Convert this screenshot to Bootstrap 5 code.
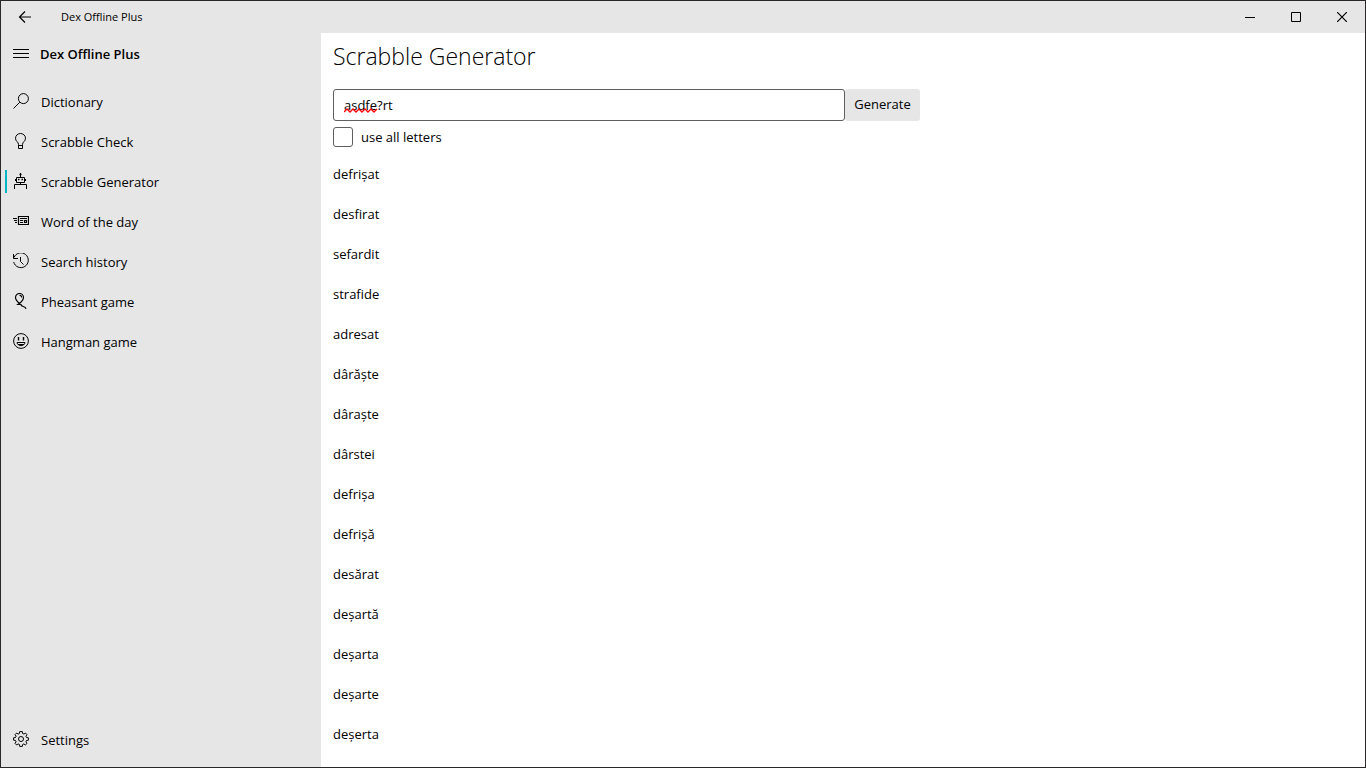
<!DOCTYPE html>
<html lang="en">
<head>
<meta charset="utf-8">
<meta name="viewport" content="width=device-width, initial-scale=1">
<title>Dex Offline Plus</title>
<link href="https://cdn.jsdelivr.net/npm/bootstrap@5.3.0/dist/css/bootstrap.min.css" rel="stylesheet">
<style>
  body { font-family: "Open Sans", "Noto Sans", sans-serif; font-size: 13px; line-height: 20px; color: #000; background: #fff; }
  .app-window { border: 1px solid #2b2829; }
  .chrome-bg { background: #e6e6e6; }
  .titlebar { height: 32px; font-size: 11px; }
  .titlebar button { width: 46px; height: 32px; border: 0; background: none; padding: 0; color: inherit; }
  .titlebar .back { width: 48px; }
  .sidebar { width: 320px; }
  .pane-head { height: 42px; font-weight: 600; margin-bottom: 7px; }
  .pane-head button { border: 0; background: none; padding: 0; width: 39px; }
  .side-link { height: 40px; padding: 0 12px; gap: 12px; color: #000; position: relative; }
  .side-link svg { margin-bottom: 2px; }
  .side-link.active::before { content: ""; position: absolute; left: 4px; top: 8px; width: 2px; height: 23px; background: #00b7c3; }
  .side-foot { margin-bottom: 7px; }
  svg { display: block; flex: none; fill: none; stroke: currentColor; }
  .page-title { font-size: 23px; line-height: 32px; font-weight: 300; margin: 7px 0 17px; }
  .query { width: 512px; }
  .query input { height: 32px; border: 1px solid #5f5f5f; border-radius: 3px; padding: 0 10px; font-size: 13px; color: #000; }
  .squiggle { position: absolute; left: 11px; top: 18px; stroke: #f00; }
  .btn-generate { width: 75px; height: 32px; padding: 0; border: 0; border-radius: 3px; background: #e6e6e6; font-size: 13px; color: #000; }
  .check-all { width: 20px; height: 20px; margin: 0; border: 1px solid #5f5f5f; }
  .form-check-input.check-all { border-radius: 3px; }
  .option-row { margin-top: 6px; }
  .words { margin-top: 7px; }
  .words li { height: 40px; }
</style>
</head>
<body>
<div class="app-window chrome-bg d-flex flex-column vh-100 overflow-hidden">
  <header class="titlebar d-flex align-items-center flex-shrink-0">
    <button class="back d-flex align-items-center justify-content-center" type="button" aria-label="Back">
      <svg width="14" height="14" viewBox="0 0 14 14" stroke-width="1.2"><path d="M1.5 7H13M7 1.5L1.5 7L7 12.5"/></svg>
    </button>
    <span class="ms-2 ps-1 me-auto">Dex Offline Plus</span>
    <button class="d-flex align-items-center justify-content-center" type="button" aria-label="Minimize"><svg width="10" height="10"><path d="M0 5.5H10"/></svg></button>
    <button class="d-flex align-items-center justify-content-center" type="button" aria-label="Maximize"><svg width="10" height="10"><path d="M.5 .5H9.5V9.5H.5Z"/></svg></button>
    <button class="d-flex align-items-center justify-content-center" type="button" aria-label="Close"><svg width="10" height="10" stroke-width="1.2"><path d="M0 0L10 10M10 0L0 10"/></svg></button>
  </header>
  <div class="d-flex flex-grow-1 overflow-hidden">
    <aside class="sidebar d-flex flex-column flex-shrink-0">
      <div class="pane-head d-flex align-items-center">
        <button type="button" class="ps-2" aria-label="Menu"><svg class="ms-1" width="16" height="10"><path d="M0 .5H16M0 4.5H16M0 8.5H16"/></svg></button>
        <span>Dex Offline Plus</span>
      </div>
      <nav class="d-flex flex-column flex-grow-1" aria-label="Main">
        <a href="#" class="side-link d-flex align-items-center text-decoration-none">
          <svg width="16" height="16"><circle cx="10.4" cy="5.6" r="5"/><path d="M6.8 9.2L.5 15.5"/></svg><span>Dictionary</span></a>
        <a href="#" class="side-link d-flex align-items-center text-decoration-none">
          <svg width="16" height="16"><path d="M5.5 11.5C5.5 8.8 2.5 8.5 2.5 5.3A5 4.8 0 0 1 12.5 5.3C12.5 8.5 9.5 8.8 9.5 11.5V15.5H5.5ZM5.5 12.5H9.5"/></svg><span>Scrabble Check</span></a>
        <a href="#" class="side-link active d-flex align-items-center text-decoration-none" aria-current="page">
          <svg width="16" height="16"><path d="M7.5 0V4M3.5 4.5H11.5V9.5H3.5ZM2.5 6V8M12.5 6V8M7.5 9.5V11M1.5 16V11.5H13.5V16"/><path d="M5 6.5H6.5M8.5 6.5H10M6.5 1.5H8.5" stroke-width="1.4"/></svg><span>Scrabble Generator</span></a>
        <a href="#" class="side-link d-flex align-items-center text-decoration-none">
          <svg width="16" height="16" stroke-width="1.2"><path d="M5.5 3.5H15.5V11.5H5.5ZM0 5.5H4M1 7.5H4M2 9.5H4M7 5.5H14M7 7.5H10M7 9.5H10M11.5 7.5H13.5V9.5H11.5Z"/></svg><span>Word of the day</span></a>
        <a href="#" class="side-link d-flex align-items-center text-decoration-none">
          <svg width="16" height="16"><path d="M1 4.5A7.4 7.4 0 1 1 .7 9M.5 1V5.5H5M7.5 4V8.5L10.5 11.5"/></svg><span>Search history</span></a>
        <a href="#" class="side-link d-flex align-items-center text-decoration-none">
          <svg width="16" height="16"><path stroke-width="1.2" d="M6.5 10.5C4.5 8.8 2.5 7 2.5 4.5A4 4 0 0 1 10.5 4.5C10.5 7 8.5 8.8 6.5 10.5L5 11.5H8C8 14.5 12.5 12.5 13 15.8M6.5 2.5C8 2.3 8.6 3.1 8.6 4.5"/></svg><span>Pheasant game</span></a>
        <a href="#" class="side-link d-flex align-items-center text-decoration-none">
          <svg width="16" height="16"><circle cx="8" cy="8" r="7.4"/><path d="M5.5 4V7.5M10.5 4V7.5" stroke-width="1.4"/><path d="M4 9.5H12C11.5 13.7 4.5 13.7 4 9.5ZM5 11.5H11"/></svg><span>Hangman game</span></a>
        <a href="#" class="side-link side-foot d-flex align-items-center text-decoration-none mt-auto">
          <svg width="16" height="16"><circle cx="8" cy="8" r="2.5"/><path d="M6.7 .6H9.3L9.6 2.5L11 3.1L12.4 2L14 3.7L12.9 5.2L13.5 6.5L15.4 6.8V9.2L13.5 9.5L12.9 10.9L14 12.4L12.3 14L10.9 12.9L9.6 13.5L9.3 15.4H6.7L6.4 13.5L5.1 12.9L3.7 14L2 12.3L3.1 10.9L2.5 9.5L.6 9.2V6.8L2.5 6.5L3.1 5.1L2 3.7L3.7 2L5.1 3.1L6.4 2.5Z"/></svg><span>Settings</span></a>
      </nav>
    </aside>
    <main class="flex-grow-1 bg-white ps-2 overflow-hidden">
      <div class="ps-1">
        <h1 class="page-title">Scrabble Generator</h1>
        <form class="d-flex">
          <div class="query position-relative">
            <input class="form-control" type="text" value="asdfe?rt" aria-label="Letters" spellcheck="false">
            <svg class="squiggle" width="34" height="7" stroke-width="1.4"><path d="M0 5L3 2L6 5L9 2L12 5L15 2L18 5L21 2L24 5L27 2L30 5L33 2"/></svg>
          </div>
          <button class="btn btn-generate" type="button">Generate</button>
        </form>
        <div class="option-row d-flex align-items-center gap-2">
          <input class="form-check-input check-all" type="checkbox" id="useAll">
          <label for="useAll">use all letters</label>
        </div>
        <ul class="words list-unstyled mb-0">
          <li class="d-flex align-items-center">defrișat</li>
          <li class="d-flex align-items-center">desfirat</li>
          <li class="d-flex align-items-center">sefardit</li>
          <li class="d-flex align-items-center">strafide</li>
          <li class="d-flex align-items-center">adresat</li>
          <li class="d-flex align-items-center">dârăște</li>
          <li class="d-flex align-items-center">dâraște</li>
          <li class="d-flex align-items-center">dârstei</li>
          <li class="d-flex align-items-center">defrișa</li>
          <li class="d-flex align-items-center">defrișă</li>
          <li class="d-flex align-items-center">desărat</li>
          <li class="d-flex align-items-center">deșartă</li>
          <li class="d-flex align-items-center">deșarta</li>
          <li class="d-flex align-items-center">deșarte</li>
          <li class="d-flex align-items-center">deșerta</li>
        </ul>
      </div>
    </main>
  </div>
</div>
<script src="https://cdn.jsdelivr.net/npm/bootstrap@5.3.0/dist/js/bootstrap.bundle.min.js"></script>
</body>
</html>
